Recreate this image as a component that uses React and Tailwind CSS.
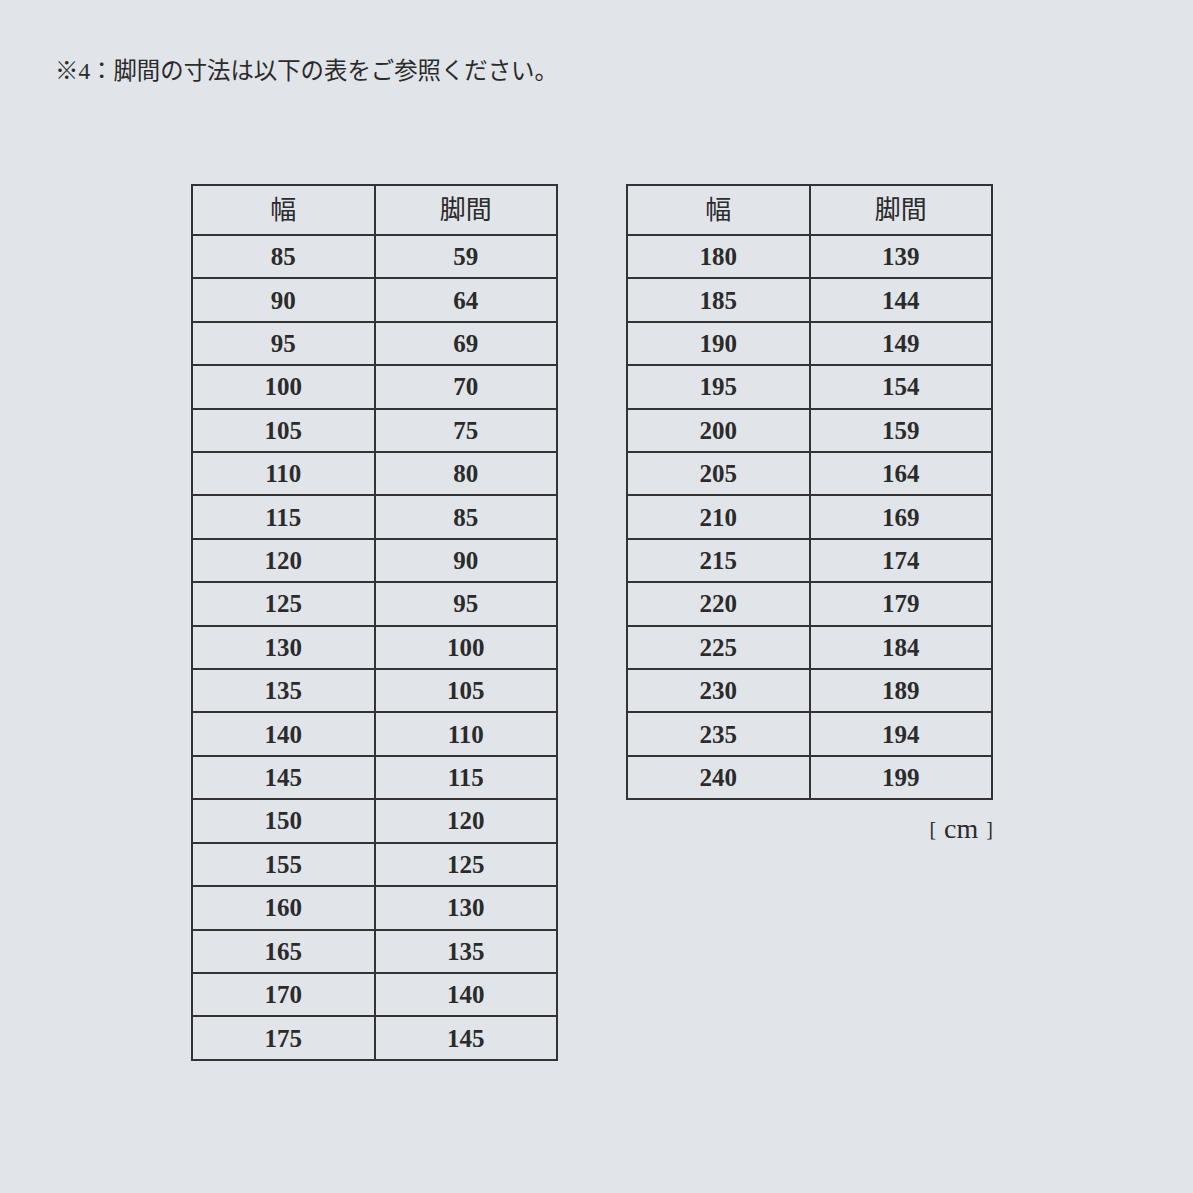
import React from 'react';

const left = [
  [85, 59], [90, 64], [95, 69], [100, 70], [105, 75], [110, 80], [115, 85],
  [120, 90], [125, 95], [130, 100], [135, 105], [140, 110], [145, 115],
  [150, 120], [155, 125], [160, 130], [165, 135], [170, 140], [175, 145],
];

const right = [
  [180, 139], [185, 144], [190, 149], [195, 154], [200, 159], [205, 164],
  [210, 169], [215, 174], [220, 179], [225, 184], [230, 189], [235, 194], [240, 199],
];

const serif = { fontFamily: '"Liberation Serif", "Noto Sans CJK JP", serif' };

function SizeTable({ rows }) {
  return (
    <table className="w-[367px] border-collapse text-[#2b2b2b]" style={serif}>
      <thead>
        <tr className="h-[50px]">
          <th className="w-1/2 border-2 border-[#333] text-[26px] font-normal">幅</th>
          <th className="w-1/2 border-2 border-[#333] text-[26px] font-normal">脚間</th>
        </tr>
      </thead>
      <tbody>
        {rows.map(([w, h]) => (
          <tr key={w} className="h-[43.42px]">
            <td className="border-2 border-[#333] text-center text-[25px] font-bold leading-none">{w}</td>
            <td className="border-2 border-[#333] text-center text-[25px] font-bold leading-none">{h}</td>
          </tr>
        ))}
      </tbody>
    </table>
  );
}

export default function App() {
  return (
    <div className="w-[1193px] h-[1193px] bg-[#e1e4e9] text-[#2b2b2b]" style={serif}>
      <div className="pl-[55px] pt-[56px] text-[23.4px] leading-[30px]">※4：脚間の寸法は以下の表をご参照ください。</div>
      <div className="flex gap-[68px] pl-[191px] pt-[98px]">
        <SizeTable rows={left} />
        <div className="flex flex-col">
          <SizeTable rows={right} />
          <div className="self-end flex items-center gap-[8px] pt-[14px] leading-[30px]">
            <span className="text-[20px]">[</span>
            <span className="text-[28px]">cm</span>
            <span className="text-[20px]">]</span>
          </div>
        </div>
      </div>
    </div>
  );
}
